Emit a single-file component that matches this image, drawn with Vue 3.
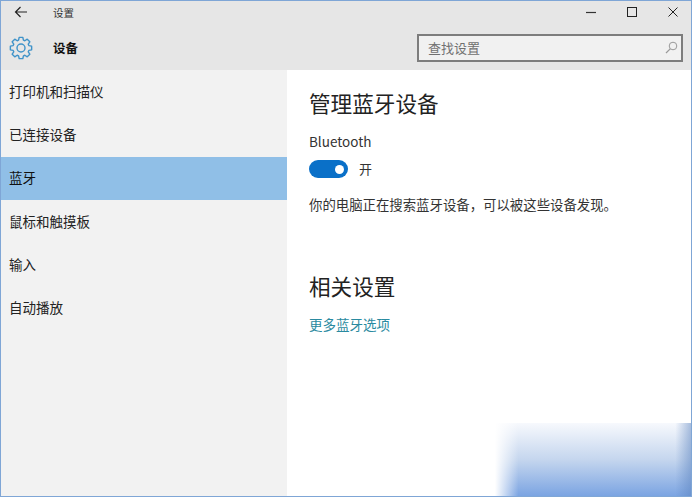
<template>
    <div class="window">
        <div class="top">
            <div class="titlebar">
                <svg class="back" width="14" height="12" viewBox="0 0 14 12">
                    <path d="M13 6H1.5M6.5 1L1.5 6l5 5" fill="none" stroke="#222" stroke-width="1.2" />
                </svg>
                <span class="app-name">设置</span>
                <div class="controls">
                    <svg width="10" height="10" viewBox="0 0 10 10"><path d="M0 5.5h10" stroke="#333" stroke-width="1.2" /></svg>
                    <svg width="10" height="10" viewBox="0 0 10 10"><rect x=".5" y=".5" width="9" height="9" fill="none" stroke="#222" /></svg>
                    <svg width="10" height="10" viewBox="0 0 10 10"><path d="M.5.5l9 9M9.5.5l-9 9" stroke="#222" /></svg>
                </div>
            </div>
            <div class="header">
                <svg class="gear" width="24" height="24" viewBox="0 0 24 24">
                    <path :d="gearPath" fill="none" stroke="#3f93c9" stroke-width="1.4" stroke-linejoin="round" />
                    <circle cx="12" cy="12" r="4" fill="none" stroke="#3f93c9" stroke-width="1.4" />
                </svg>
                <span class="section">设备</span>
                <div class="search">
                    <span>查找设置</span>
                    <svg width="13" height="13" viewBox="0 0 13 13">
                        <circle cx="8" cy="5" r="3.8" fill="none" stroke="#999" />
                        <path d="M5.2 7.8L1 12" stroke="#999" stroke-width="1.2" />
                    </svg>
                </div>
            </div>
        </div>
        <div class="body">
            <nav class="sidebar">
                <div
                    v-for="item in items"
                    :key="item"
                    class="nav-item"
                    :class="{ active: item === '蓝牙' }"
                >{{ item }}</div>
            </nav>
            <main class="content">
                <h1>管理蓝牙设备</h1>
                <div class="label">Bluetooth</div>
                <div class="toggle-row">
                    <span class="toggle"><i></i></span>
                    <span>开</span>
                </div>
                <p>你的电脑正在搜索蓝牙设备，可以被这些设备发现。</p>
                <h2>相关设置</h2>
                <a class="link">更多蓝牙选项</a>
            </main>
        </div>
        <div class="corner"></div>
    </div>
</template>

<script setup>
const items = ['打印机和扫描仪', '已连接设备', '蓝牙', '鼠标和触摸板', '输入', '自动播放']

// Roue dentée à 8 dents
const buildGear = () => {
    const pts = []
    for (let i = 0; i < 8; i++) {
        const a = (i * Math.PI) / 4
        for (const [r, d] of [[8.2, -0.3], [10.8, -0.17], [10.8, 0.17], [8.2, 0.3]]) {
            const x = 12 + r * Math.cos(a + d)
            const y = 12 + r * Math.sin(a + d)
            pts.push(`${x.toFixed(2)} ${y.toFixed(2)}`)
        }
    }
    return 'M' + pts.join('L') + 'Z'
}
const gearPath = buildGear()
</script>

<style scoped>
.window {
    position: relative;
    width: 692px;
    height: 497px;
    box-sizing: border-box;
    border: 1px solid #7fa6d6;
    background: #fff;
    overflow: hidden;
    display: flex;
    flex-direction: column;
    font-family: "Noto Sans CJK SC", "Liberation Sans", sans-serif;
    color: #1a1a1a;
}

.top {
    height: 69px;
    flex: none;
    background: #e6e6e6;
}

.titlebar {
    height: 22px;
    display: flex;
    align-items: center;
    padding: 0 13px;
    font-size: 10.5px;
    color: #333;
}

.back {
    margin-right: 25px;
}

.app-name {
    flex: 1;
}

.controls {
    display: flex;
    gap: 31px;
    align-items: center;
}

.header {
    height: 47px;
    box-sizing: border-box;
    padding: 2px 8px 0 8px;
    display: flex;
    align-items: center;
}

.gear {
    margin-right: 20px;
}

.section {
    flex: 1;
    font-size: 12.5px;
    font-weight: 700;
    color: #111;
}

.search {
    width: 266px;
    height: 28px;
    box-sizing: border-box;
    border: 2px solid #7d7d7d;
    background: #f1f1f1;
    display: flex;
    align-items: center;
    justify-content: space-between;
    padding: 0 3px 0 9px;
    font-size: 13px;
    color: #707070;
}

.body {
    flex: 1;
    display: flex;
    min-height: 0;
}

.sidebar {
    width: 286px;
    flex: none;
    background: #f2f2f2;
}

.nav-item {
    height: 43.33px;
    box-sizing: border-box;
    padding: 0 0 2px 8px;
    display: flex;
    align-items: center;
    font-size: 13.5px;
    color: #222;
}

.nav-item.active {
    background: #90bfe7;
    color: #111;
}

.content {
    flex: 1;
    padding: 18px 0 0 22px;
}

h1,
h2 {
    margin: 0;
    font-weight: 400;
    font-size: 21.6px;
    line-height: 30px;
    color: #222;
}

.label {
    margin-top: 14px;
    font-size: 13.5px;
    line-height: 18px;
    color: #333;
}

.toggle-row {
    display: flex;
    align-items: center;
    gap: 11px;
    margin-top: 10px;
    font-size: 13px;
    line-height: 18px;
    color: #333;
}

.toggle {
    width: 39px;
    height: 18px;
    border-radius: 9px;
    background: #0a70c8;
    display: flex;
    align-items: center;
    justify-content: flex-end;
    padding-right: 4px;
    box-sizing: border-box;
}

.toggle i {
    width: 9px;
    height: 9px;
    border-radius: 50%;
    background: #fff;
}

p {
    margin: 16px 0 0;
    font-size: 13.4px;
    line-height: 20px;
    color: #333;
}

h2 {
    margin-top: 57px;
}

.link {
    display: block;
    margin-top: 14px;
    font-size: 13.5px;
    line-height: 18px;
    color: #2a8aa0;
}

/* Dégradé bleu en bas à droite */
.corner {
    position: absolute;
    right: 0;
    bottom: 0;
    width: 196px;
    height: 73px;
    background:
        linear-gradient(to right, #fff 0, rgba(255, 255, 255, 0) 12%),
        linear-gradient(to left, rgba(90, 130, 190, 0.5) 0, rgba(90, 130, 190, 0) 8%),
        linear-gradient(to bottom, #f7f9fd 0, #c5d6ee 50%, #7ba4e2 100%);
}
</style>
